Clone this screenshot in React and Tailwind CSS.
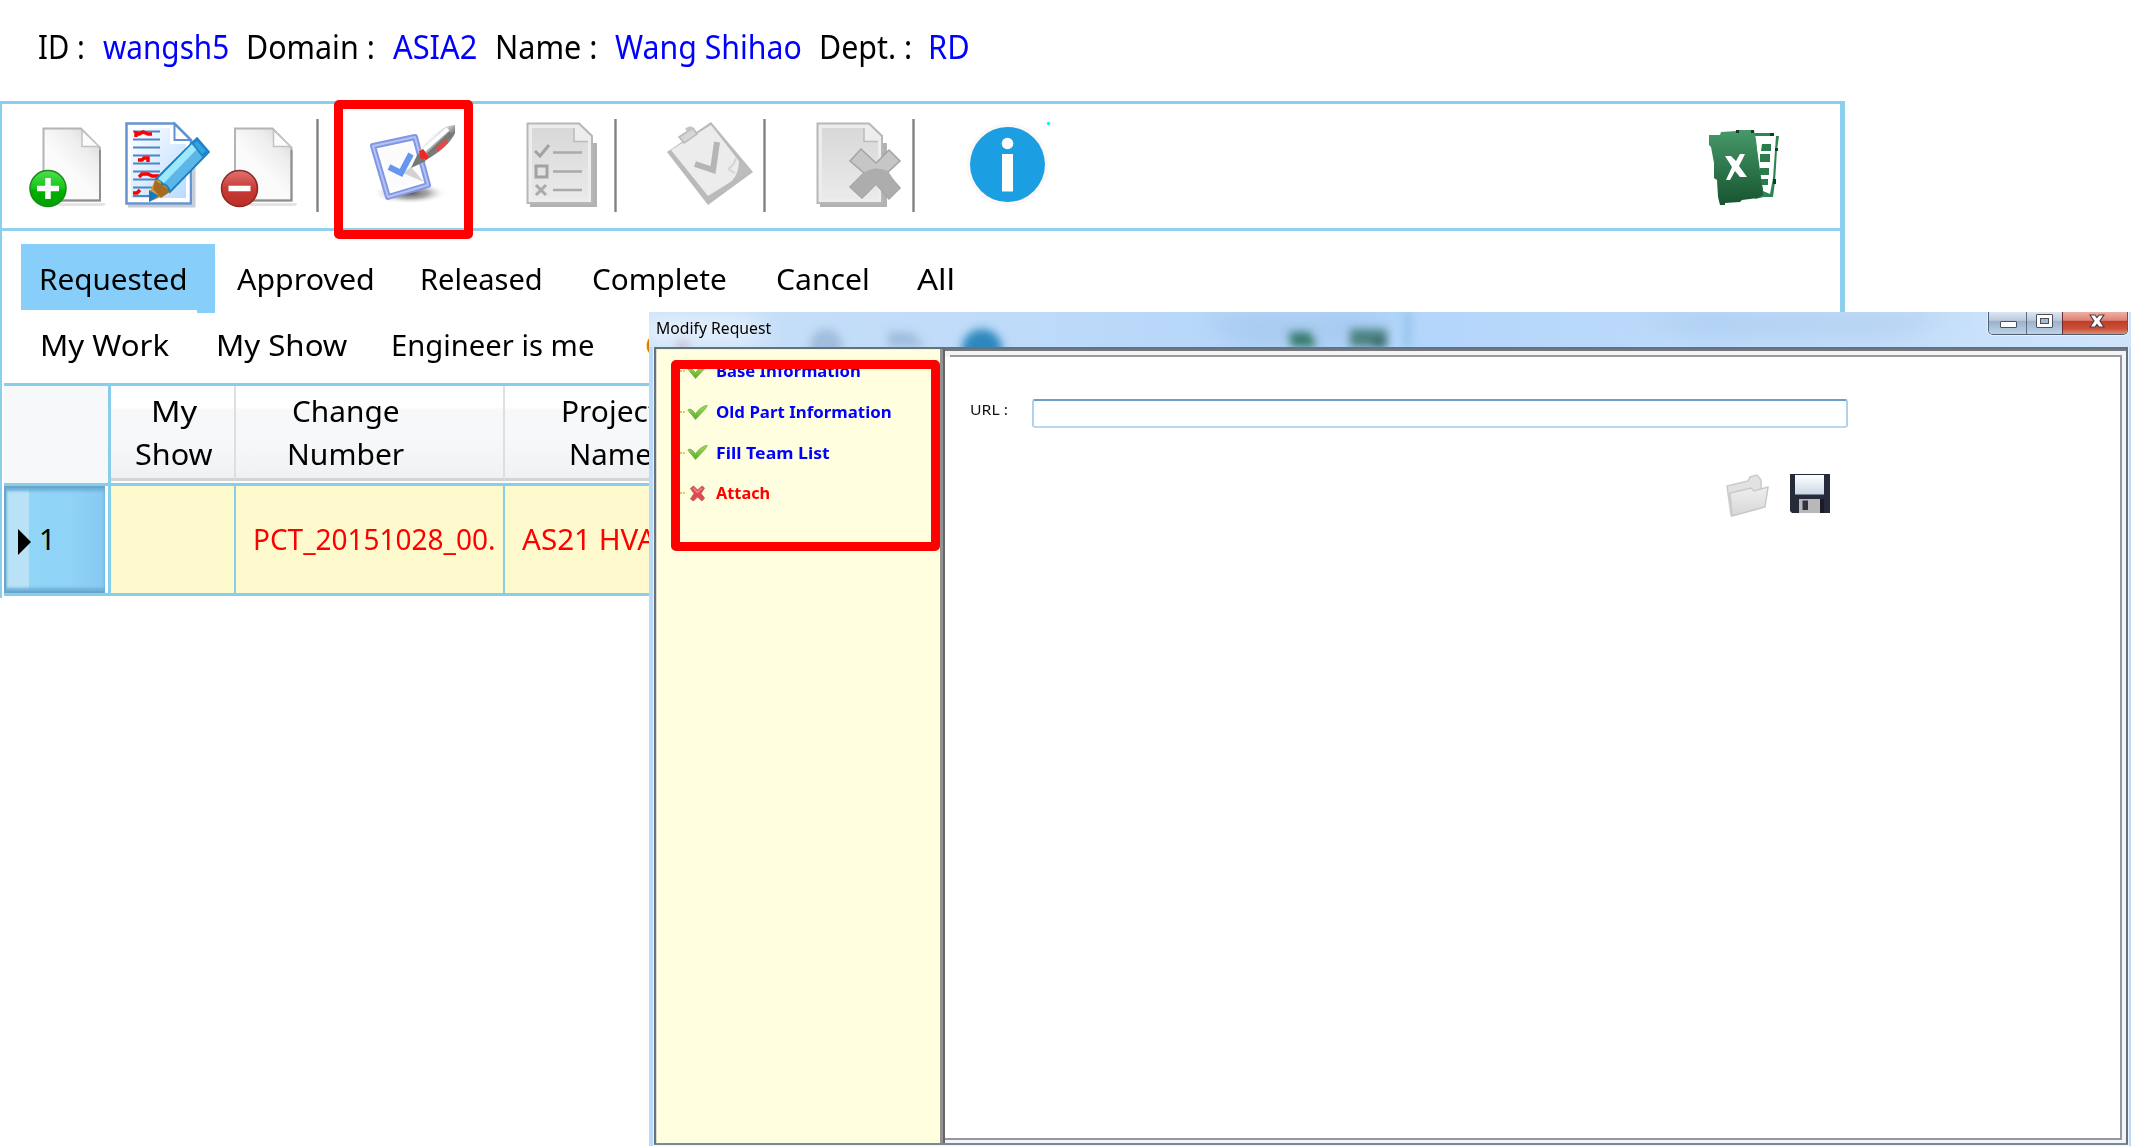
import React, { useLayoutEffect, useRef } from "react";

/* Single line of text, condensed or widened to the width of its box. */
function Fit({ className = "", children }) {
  const ref = useRef(null);
  useLayoutEffect(() => {
    const el = ref.current;
    el.style.transform = `scaleX(${el.parentElement.clientWidth / el.offsetWidth})`;
  }, [children]);
  return (
    <span className={`block shrink-0 whitespace-nowrap ${className}`}>
      <span ref={ref} className="inline-block origin-left">{children}</span>
    </span>
  );
}

function Separator({ className }) {
  return <div className={`mt-[15px] h-[93px] w-[3px] shrink-0 border-l border-r border-[#a8a8a8] bg-[#808080] ${className}`} />;
}

function Page({ x }) {
  return (
    <g transform={`translate(${x} 0)`}>
      <path d="M46 203H104L106 204 104 206H60Z" fill="#e4e4e4" />
      <path d="M43.500 128.500H81L100 148V200.500H43.500Z" fill="url(#paper)" stroke="#b4b4b4" strokeWidth="2" />
      <path d="M44 200.500H100V150" fill="none" stroke="#8f8f8f" strokeWidth="2" />
      <path d="M82 130V146.500H99Z" fill="#fbfbfb" stroke="#c2c2c2" strokeWidth="1.500" />
    </g>
  );
}

function AddIcon() {
  return (
    <svg className="mt-[15px] ml-[25px] h-[93px] w-[80px] shrink-0" viewBox="27 119 80 93">
      <defs>
        <linearGradient id="paper" x1="1" y1="0" x2=".5" y2=".6">
          <stop offset="0" stopColor="#cfcfcf" /><stop offset=".5" stopColor="#ededed" /><stop offset="1" stopColor="#fbfbfb" />
        </linearGradient>
        <linearGradient id="green" x1="0" y1="0" x2="0" y2="1">
          <stop offset="0" stopColor="#4fe04f" /><stop offset=".5" stopColor="#14c414" /><stop offset=".55" stopColor="#00b000" /><stop offset="1" stopColor="#00a000" />
        </linearGradient>
      </defs>
      <Page x={0} />
      <circle cx="48" cy="188.500" r="18" fill="url(#green)" stroke="#178a17" strokeWidth="1.500" />
      <path d="M48 178V199M37 188.500H59" stroke="#fff" strokeWidth="5.500" />
    </svg>
  );
}

function RemoveIcon() {
  return (
    <svg className="mt-[15px] ml-[5px] h-[93px] w-[80px] shrink-0" viewBox="218 119 80 93">
      <defs>
        <linearGradient id="red" x1="0" y1="0" x2="0" y2="1">
          <stop offset="0" stopColor="#dc7470" /><stop offset=".5" stopColor="#ca3c36" /><stop offset="1" stopColor="#b82e28" />
        </linearGradient>
      </defs>
      <Page x={191.5} />
      <circle cx="239.500" cy="188.500" r="18" fill="url(#red)" stroke="#8f2926" strokeWidth="1.500" />
      <path d="M228.500 188.500H250.500" stroke="#fff" strokeWidth="5.500" />
    </svg>
  );
}

function EditIcon() {
  return (
    <svg className="mt-[15px] ml-[15px] h-[93px] w-[91px] shrink-0" viewBox="122 119 91 93">
      <defs>
        <linearGradient id="sheet" x1="0" y1="0" x2="1" y2="1">
          <stop offset="0" stopColor="#ffffff" /><stop offset="1" stopColor="#b9dbff" />
        </linearGradient>
      </defs>
      <path d="M128 206H194V142" fill="none" stroke="#c9cdd2" strokeWidth="3" />
      <path d="M126.500 123.500H174.500L191 140V203.500H126.500Z" fill="#fff" stroke="#6495d0" strokeWidth="2.500" />
      <path d="M131 128H170V144H186V198H131Z" fill="url(#sheet)" />
      <path d="M174.500 124V140H190.500Z" fill="#fff" stroke="#5f92cf" strokeWidth="2" />
      <path d="M133 131.500H160M133 139.500H160M133 147.500H160M133 155.500H160M133 163.500H160M133 171.500H160M133 179.500H160M133 187.500H155M133 196H153" stroke="#4b86c9" strokeWidth="2" />
      <path d="M136 137V133L139 134 143 132 148 134H152M138 160H142L144 158H148V162M139 177L142 174H148L152 176H159M133 193H137L140 190" fill="none" stroke="#f00" strokeWidth="3.500" />
      <path d="M155 180L166 176 171 191 161 197 149 202 150 191Z" fill="#d99b3b" />
      <path d="M155 180L171 191 161 198 153 189Z" fill="#a66a22" />
      <path d="M149 190L159 196 149 202Z" fill="#1479c4" />
      <path d="M156 179L197 138 209 152 170 192Q168 184 162 184Q162 179 156 179Z" fill="#5cb6e8" stroke="#1680bf" strokeWidth="1.800" />
      <path d="M158 179L192 144 197 149 164 183Z" fill="#9ee8fb" />
      <path d="M191 143L197 138 209 152 203 158Z" fill="#1c87cc" />
      <path d="M194 144L197 141 206 151 202 154Z" fill="#35a2e0" />
    </svg>
  );
}

function NoteIcon() {
  return (
    <svg className="h-[93px] w-[93px] shrink-0" viewBox="366 119 93 93">
      <defs>
        <radialGradient id="shade"><stop offset="0" stopColor="#555" /><stop offset=".5" stopColor="#999" stopOpacity=".8" /><stop offset="1" stopColor="#fff" stopOpacity="0" /></radialGradient>
        <linearGradient id="pen" x1="0" y1="0" x2="1" y2="1"><stop offset="0" stopColor="#999" /><stop offset=".35" stopColor="#fafafa" /><stop offset=".6" stopColor="#777" /><stop offset="1" stopColor="#eee" /></linearGradient>
      </defs>
      <ellipse cx="410" cy="193" rx="37" ry="11" fill="url(#shade)" />
      <path d="M373 146L415 137 428 185 388 197Z" fill="#fff" stroke="#8297e4" strokeWidth="6" strokeLinejoin="round" />
      <path d="M373 146L415 137 428 185 388 197Z" fill="none" stroke="#b4c2f4" strokeWidth="2" strokeLinejoin="round" />
      <path d="M379 150L412 143 422 181 392 190Z" fill="#fbfbfb" />
      <path d="M411 167L424 182 403 173Z" fill="#d2d2d2" />
      <path d="M389 167L401 173 411 154" fill="none" stroke="#6595ef" strokeWidth="6" />
      <path d="M411 168L418 153 426 161Z" fill="#777" />
      <path d="M419 152Q432 131 448 126L455 125V133Q449 147 426 160Z" fill="url(#pen)" />
      <path d="M424 150L448 129" stroke="#fff" strokeWidth="4" />
      <path d="M428 155L451 133" stroke="#777" strokeWidth="4" />
      <path d="M419 151L423 149 429 157 426 160 420 158Z" fill="#ed2626" />
      <path d="M437 150L447 141" stroke="#f04444" strokeWidth="4" />
    </svg>
  );
}

function GreyPage({ x }) {
  return (
    <g transform={`translate(${x} 0)`}>
      <path d="M530 205H595V143" fill="none" stroke="#b2b2b2" strokeWidth="4" />
      <path d="M527.500 123.500H579L592 136V203H527.500Z" fill="#ededed" stroke="#b7b7b7" strokeWidth="2" />
      <path d="M532 128H574V142H588V199H532Z" fill="url(#greyfill)" />
      <path d="M574 128V141.500H588" fill="none" stroke="#bbb" strokeWidth="1.500" />
    </g>
  );
}

function ListIcon() {
  return (
    <svg className="mt-[15px] ml-[50px] h-[93px] w-[76px] shrink-0" viewBox="523 119 76 93">
      <defs><linearGradient id="greyfill" x1="0" y1="0" x2="0" y2="1"><stop offset="0" stopColor="#d8d8d8" /><stop offset="1" stopColor="#eaeaea" /></linearGradient></defs>
      <GreyPage x={0} />
      <path d="M535 151L540 156 549 145" fill="none" stroke="#a2a2a2" strokeWidth="3" />
      <rect x="536" y="166" width="11" height="11" fill="none" stroke="#a2a2a2" strokeWidth="3" />
      <path d="M536 185L546 195M546 185L536 195" stroke="#aaa" strokeWidth="3" />
      <path d="M553 152.500H582M553 171.500H582M553 190H582" stroke="#aaa" strokeWidth="2.500" />
    </svg>
  );
}

function ClipboardIcon() {
  return (
    <svg className="mt-[15px] ml-[47px] h-[93px] w-[91px] shrink-0" viewBox="664 119 91 93">
      <path d="M667 152L711 122 753 172 708 205Z" fill="#bababa" />
      <path d="M671 150L711 125 739 161Q739 173 732 181L708 196Z" fill="#ececec" />
      <path d="M732 181Q741 171 740 160L751 172Z" fill="#bdbdbd" />
      <path d="M728 169Q734 166 736 158M728 169L735 173" fill="none" stroke="#d4d4d4" strokeWidth="2" />
      <path d="M679 137L693 128 697 134 684 143Z" fill="#d6d6d6" stroke="#b8b8b8" strokeWidth="1.500" />
      <path d="M686 130L692 128" stroke="#c4c4c4" strokeWidth="4" />
      <path d="M695 164L713 170 717 142" fill="none" stroke="#b5b5b5" strokeWidth="6" />
    </svg>
  );
}

function CancelIcon() {
  return (
    <svg className="mt-[15px] ml-[47px] h-[93px] w-[90px] shrink-0" viewBox="813 119 90 93">
      <GreyPage x={290} />
      <path d="M850 161L861 149 876 163 889 150 900 161 887 173 900 188 889 199 876 184 862 198 850 187 864 173Z" fill="#c6c6c6" stroke="#a3a3a3" strokeWidth="1.500" />
      <path d="M863 173Q875 165 888 171L899 188 889 198 876 184 862 197 851 187Z" fill="#adadad" />
    </svg>
  );
}

function InfoIcon() {
  return (
    <svg className="mt-[15px] ml-[49px] h-[93px] w-[90px] shrink-0" viewBox="964 119 90 93">
      <circle cx="1007.500" cy="164.500" r="41" fill="#fcf8f8" />
      <circle cx="1007.500" cy="164.500" r="37.500" fill="#1b9fe2" />
      <circle cx="1007.500" cy="143.500" r="5.800" fill="#fff" />
      <path d="M1002 154H1013V191.500H1002Z" fill="#fff" />
      <circle cx="1048.500" cy="123.500" r="1.800" fill="#0ff" />
    </svg>
  );
}

function ExcelIcon() {
  return (
    <svg className="mt-[15px] mr-[58px] ml-auto h-[93px] w-[76px] shrink-0" viewBox="1706 119 76 93">
      <defs><linearGradient id="xl" x1="0" y1="0" x2="0" y2="1"><stop offset="0" stopColor="#479969" /><stop offset="1" stopColor="#175430" /></linearGradient></defs>
      <path d="M1752 133L1773 133 1774 136 1779 136 1777 150 1775 182 1773 197H1764L1755 199Z" fill="#2e8554" />
      <path d="M1755 136H1776L1773 178 1770 194 1763 191Z" fill="#fff" />
      <path d="M1762 144H1771V151H1761ZM1760 154H1770V162H1760ZM1760 168H1769V175H1759ZM1759 179H1768V185H1759Z" fill="#2c7b4d" />
      <path d="M1709 135L1720 135 1721 132 1737 131V130H1754L1756 140 1758 160 1761 180 1763 190V195L1758 198 1742 200 1740 202 1725 203V205H1720L1718 197 1717 180 1714 178 1714 163 1711 147 1709 145Z" fill="url(#xl)" />
      <path d="M1725 156H1731L1736 161 1740 154H1745L1739 166 1747 177H1740L1735 171 1730 180H1726L1732 167Z" fill="#fff" />
      <path d="M1736 130H1739V133H1736ZM1751 130H1754V133H1751ZM1770 133H1774V136H1770ZM1775 148H1778V151H1775ZM1773 179H1776V184H1773Z" fill="#123c26" />
    </svg>
  );
}

function CheckIcon() {
  return (
    <svg className="h-[17px] w-[21px] shrink-0" viewBox="0 0 21 17">
      <defs><linearGradient id="tick" x1="0" y1="0" x2="0" y2="1"><stop offset="0" stopColor="#a3e35c" /><stop offset="1" stopColor="#55ab20" /></linearGradient></defs>
      <path d="M.8 6Q2.500 4 5 6L8.500 9.500Q13 3.500 18 1.800L20.300 1.500Q19 5 15 8.500L8.500 15.500Z" fill="url(#tick)" stroke="#7fae64" strokeWidth=".9" />
    </svg>
  );
}

function CrossIcon() {
  return (
    <svg className="h-[17px] w-[21px] shrink-0" viewBox="0 0 21 17">
      <path d="M3.500 3.500L6.500 1 10.500 5 15 1 17.500 3 14 8.500 17.500 13 15 16 10.500 12 6.500 16 3.500 14 7 8.500Z" fill="#e0484b" stroke="#b8696c" strokeWidth="1" />
      <path d="M6 3L10.500 7.500 15 3" fill="none" stroke="#ee8587" strokeWidth="1.500" />
    </svg>
  );
}

function TreeItem({ icon, children }) {
  return (
    <li className="flex h-[40.7px] items-center">
      <span className="mr-[2px] w-[5px] border-t-2 border-dotted border-[#f2b84a]" />
      {icon}
      <span className="w-[8px] shrink-0" />
      {children}
    </li>
  );
}

function Sidebar() {
  return (
    <aside className="w-[283px] shrink-0 border-t border-[#f5f5d4] bg-[#ffffe0]">
      <ul className="mt-[1px] ml-[23px] text-[16.3px] leading-[24px] font-bold text-[#0000ff]">
        <TreeItem icon={<CheckIcon />}><Fit className="w-[145px]">Base Information</Fit></TreeItem>
        <TreeItem icon={<CheckIcon />}><Fit className="w-[176px]">Old Part Information</Fit></TreeItem>
        <TreeItem icon={<CheckIcon />}><Fit className="w-[114px]">Fill Team List</Fit></TreeItem>
        <TreeItem icon={<CrossIcon />}><Fit className="w-[54px] text-[#ff0000]">Attach</Fit></TreeItem>
      </ul>
    </aside>
  );
}

function TitleBar() {
  return (
    <div className="relative flex h-[35px] shrink-0 overflow-hidden bg-linear-to-r from-[#c9e0f8] via-[#b2d5fa] to-[#cfe4fa]">
      <svg className="absolute inset-0 h-[35px] w-full" viewBox="649 312 1482 35" preserveAspectRatio="none">
        <defs>
          <filter id="soft" x="-50%" y="-50%" width="200%" height="200%"><feGaussianBlur stdDeviation="4" /></filter>
          <filter id="haze" x="-50%" y="-50%" width="200%" height="200%"><feGaussianBlur stdDeviation="12" /></filter>
        </defs>
        <path d="M1200 312H1400L1340 347H1240ZM1630 312H1960L1900 335H1700Z" fill="#8fb6df" opacity=".35" filter="url(#haze)" />
        <path d="M640 320H760V340H640Z" fill="#fff" opacity=".75" filter="url(#haze)" />
        <g filter="url(#soft)">
          <circle cx="683" cy="346" r="7" fill="#c3a5b5" opacity=".5" />
          <circle cx="826" cy="345" r="16" fill="#8aa9cc" opacity=".6" />
          <path d="M888 332H912L925 347H888Z" fill="#8aa9cc" opacity=".6" />
          <circle cx="982" cy="349" r="20" fill="#2f88bd" />
          <path d="M1289 332H1310L1317 347H1291Z" fill="#357a6c" />
          <path d="M1350 329H1387V347H1350Z" fill="#4b8280" />
          <path d="M1373 340H1386V347H1373Z" fill="#23504c" />
          <path d="M1405 312H1410V347H1405Z" fill="#77b3dc" opacity=".7" />
        </g>
      </svg>
      <Fit className="relative ml-[7px] mt-[4px] w-[115px] text-[16px] leading-[24px] text-black">Modify Request</Fit>
      <div className="relative mr-[3px] ml-auto flex h-[23px] w-[140px] overflow-hidden rounded-b-[5px] border border-t-0 border-[#4f5d70] shadow-[0_0_0_1px_#e6f1fc]">
        <div className="flex w-[38px] items-center justify-center border-r border-[#5b6b80] bg-[linear-gradient(#dbe6f3_0%,#bccadb_38%,#9cb0ca_42%,#bdd2ea_100%)]">
          <div className="mt-[3px] ml-[2px] h-[7px] w-[17px] rounded-[1px] border border-[#4b5058] bg-white" />
        </div>
        <div className="flex w-[36px] items-center justify-center border-r border-[#6a2a28] bg-[linear-gradient(#dbe6f3_0%,#bccadb_38%,#9cb0ca_42%,#bdd2ea_100%)]">
          <div className="mb-[4px] flex h-[14px] w-[17px] items-center justify-center rounded-[1px] border border-[#4b5058] bg-white">
            <div className="h-[6px] w-[9px] border border-[#4b5058] bg-[#aab9cc]" />
          </div>
        </div>
        <div className="flex flex-1 items-center justify-center bg-[linear-gradient(#f0b0a4_0%,#dd8374_38%,#c03c27_42%,#c9513a_75%,#e08c72_100%)]">
          <svg className="mb-[4px] ml-[3px] h-[14px] w-[16px]" viewBox="0 0 16 14">
            <path d="M1 1H6L8 3.500 10 1H15L11 7 15 13H10L8 10.500 6 13H1L5 7Z" fill="#fff" stroke="#4c3c46" strokeWidth="1.200" />
          </svg>
        </div>
      </div>
    </div>
  );
}

function UploadPanel() {
  return (
    <section className="flex min-w-0 flex-1 flex-col border-t-2 border-[#77777c] bg-[#f4f4f4] pt-[4px] pr-[4px] pb-[3px]">
      <div className="ml-[5px] h-[2px] shrink-0 bg-[#9a9aa2]" />
      <div className="flex flex-1 flex-col border-r-2 border-b-2 border-[#9298a2] bg-white">
        <div className="flex pt-[42px]">
          <Fit className="-mt-[4px] ml-[25px] w-[38px] text-[15px] leading-[28px] text-[#111]">URL :</Fit>
          <div className="ml-[24px] h-[29px] w-[816px] rounded-[3px] border-2 border-x-[#b5cfe7] border-t-[#6b9fc9] border-b-[#b7d9f0] bg-white" />
        </div>
        <div className="flex pt-[44px] pl-[780px]">
          <svg className="h-[46px] w-[46px]" viewBox="1725 473 46 46">
            <defs><linearGradient id="folder" x1="0" y1="0" x2="0" y2="1"><stop offset="0" stopColor="#efefef" /><stop offset="1" stopColor="#d6d6d6" /></linearGradient></defs>
            <path d="M1727 487L1748 482 1750 478 1757 476 1761 481 1762 506 1731 516Z" fill="#e2e2e2" stroke="#cbcbcb" strokeWidth="1.500" />
            <path d="M1730 494L1751 489 1754 492 1768 488 1765 508 1732 517Z" fill="url(#folder)" stroke="#c8c8c8" strokeWidth="1.500" />
          </svg>
          <svg className="ml-[17px] h-[46px] w-[46px]" viewBox="1788 473 46 46">
            <defs><linearGradient id="label" x1="0" y1="0" x2="0" y2="1"><stop offset="0" stopColor="#fff" /><stop offset="1" stopColor="#c9d8e6" /></linearGradient></defs>
            <path d="M1790 475H1830V514H1792L1790 512Z" fill="#262b3c" />
            <path d="M1795 476H1824V495.500H1795Z" fill="url(#label)" />
            <path d="M1799 500H1820V514H1799Z" fill="#b8b8b8" />
            <path d="M1802.500 501.500H1808V511H1802.500Z" fill="#30343f" />
            <path d="M1820 500H1824V514H1820Z" fill="#1a1d28" />
          </svg>
        </div>
      </div>
    </section>
  );
}

function ModifyWindow() {
  return (
    <div className="absolute top-[312px] left-[649px] flex h-[834px] w-[1482px] flex-col bg-[#bbdafb]">
      <TitleBar />
      <div className="mr-[3px] mb-[1px] ml-[5px] flex flex-1 border-2 border-[#64717f] border-b-[#7a8a9b] shadow-[0_0_0_1px_#e8f3fd]">
        <div className="w-[1px] bg-[#d9dcc9]" />
        <Sidebar />
        <div className="w-[5px] shrink-0 border-r-2 border-[#66666a] bg-[#929292]" />
        <UploadPanel />
      </div>
      <div className="absolute top-[48px] left-[22px] h-[191px] w-[269px] rounded-[5px] border-[9px] border-[#ff0000]" />
    </div>
  );
}

function Toolbar() {
  return (
    <div className="flex h-[127px] border-b-[3px] border-[#8fd2ed]">
      <AddIcon />
      <EditIcon />
      <RemoveIcon />
      <Separator className="ml-[18px]" />
      <div className="z-10 -mt-[4px] ml-[15px] flex h-[139px] w-[139px] shrink-0 items-center justify-center rounded-[5px] border-[9px] border-[#ff0000] pb-[8px] pl-[17px]">
        <NoteIcon />
      </div>
      <ListIcon />
      <Separator className="ml-[15px]" />
      <ClipboardIcon />
      <Separator className="ml-[8px]" />
      <CancelIcon />
      <Separator className="ml-[9px]" />
      <InfoIcon />
      <ExcelIcon />
    </div>
  );
}

function Tabs() {
  return (
    <nav className="h-[152px] pt-[13px] text-[29.5px] leading-[66px] text-black">
      <div className="flex h-[66px]">
        <div className="relative ml-[19px] w-[194px] shrink-0 bg-[#87cefa]">
          <Fit className="ml-[18px] w-[149px] pt-[2px]">Requested</Fit>
          <div className="absolute top-[66px] right-0 h-[3px] w-[18px] bg-[#87cefa]" />
        </div>
        <Fit className="ml-[22px] w-[138px] pt-[2px]">Approved</Fit>
        <Fit className="ml-[45px] w-[123px] pt-[2px]">Released</Fit>
        <Fit className="ml-[49px] w-[135px] pt-[2px]">Complete</Fit>
        <Fit className="ml-[49px] w-[94px] pt-[2px]">Cancel</Fit>
        <Fit className="ml-[47px] w-[38px] pt-[2px]">All</Fit>
      </div>
      <div className="flex pt-[2px]">
        <Fit className="ml-[38px] w-[129px]">My Work</Fit>
        <Fit className="ml-[47px] w-[131px]">My Show</Fit>
        <Fit className="ml-[44px] w-[203px]">Engineer is me</Fit>
        <span className="ml-[51px] w-[5px] overflow-hidden text-[#d87c10]">C</span>
      </div>
    </nav>
  );
}

const headCell = "h-[95px] shrink-0 border-r-2 border-[#dedfe2] bg-[linear-gradient(#fff_0%,#fff_24%,#f7f8fa_25%,#f7f8fa_60%,#f0f1f3_100%)] border-b-[3px] border-b-[#d2d3d5] pt-[4px]";

function Grid() {
  return (
    <div className="ml-[2px] h-[213px] text-[29px] leading-[42.5px] text-black">
      <div className="flex h-[100px] overflow-hidden border-t-[3px] border-[#87ceeb]">
        <div className="w-[107px] shrink-0 border-r-[3px] border-[#87ceeb] bg-[#f7f8fa]" />
        <div className={`w-[125px] ${headCell}`}>
          <Fit className="ml-[40px] w-[46px]">My</Fit>
          <Fit className="ml-[24px] w-[78px]">Show</Fit>
        </div>
        <div className={`w-[269px] ${headCell}`}>
          <Fit className="ml-[56px] w-[108px]">Change</Fit>
          <Fit className="ml-[51px] w-[117px]">Number</Fit>
        </div>
        <div className={`w-[200px] ${headCell}`}>
          <Fit className="ml-[56px] w-[98px]">Project</Fit>
          <Fit className="ml-[64px] w-[83px]">Name</Fit>
        </div>
      </div>
      <div className="flex h-[113px] overflow-hidden border-y-[3px] border-[#87ceeb] leading-[106px]">
        <div className="flex w-[107px] shrink-0 border-r-[3px] border-[#87ceeb] bg-white pr-[3px]">
          <div className="flex w-full items-center border-y-2 border-l-2 border-[#6aa5cb] bg-[linear-gradient(90deg,#b9e2f6_0%,#b9e2f6_23%,#8fd6f7_23%,#8fd3f6_65%,#87c9f1_100%)] shadow-[inset_0_3px_3px_#6fb0d8,inset_0_-3px_3px_#6fb0d8]">
            <svg className="mt-[4px] ml-[11px] h-[26px] w-[14px]" viewBox="0 0 14 26"><path d="M1 0L14 13 1 26Z" fill="#000" /></svg>
            <Fit className="-mt-[2px] ml-[8px] w-[17px]">1</Fit>
          </div>
        </div>
        <div className="w-[125px] shrink-0 border-r-2 border-[#87ceeb] bg-[#fffacd]" />
        <div className="w-[269px] shrink-0 border-r-2 border-[#87ceeb] bg-[#fffacd] text-[#ff0000]">
          <Fit className="ml-[17px] w-[242px]">PCT_20151028_00.</Fit>
        </div>
        <div className="w-[200px] shrink-0 bg-[#fffacd] text-[#ff0000]">
          <Fit className="ml-[17px] w-[152px]">AS21 HVAC</Fit>
        </div>
      </div>
    </div>
  );
}

export default function App() {
  return (
    <div className="relative h-[1146px] w-[2131px] overflow-hidden bg-white font-['Noto_Sans',sans-serif]">
      <header className="flex h-[101px] pt-[25px] text-[33px] leading-[44px] text-black">
        <Fit className="ml-[38px] w-[47px]">ID :</Fit>
        <Fit className="ml-[18px] w-[126px] text-[#0000ff]">wangsh5</Fit>
        <Fit className="ml-[17px] w-[129px]">Domain :</Fit>
        <Fit className="ml-[18px] w-[84px] text-[#0000ff]">ASIA2</Fit>
        <Fit className="ml-[18px] w-[102px]">Name :</Fit>
        <Fit className="ml-[18px] w-[187px] text-[#0000ff]">Wang Shihao</Fit>
        <Fit className="ml-[17px] w-[93px]">Dept. :</Fit>
        <Fit className="ml-[16px] w-[42px] text-[#0000ff]">RD</Fit>
      </header>
      <main className="h-[497px] w-[1845px] border-t-[3px] border-r-[5px] border-l-2 border-[#8ccfec]">
        <Toolbar />
        <Tabs />
        <Grid />
      </main>
      <ModifyWindow />
    </div>
  );
}
